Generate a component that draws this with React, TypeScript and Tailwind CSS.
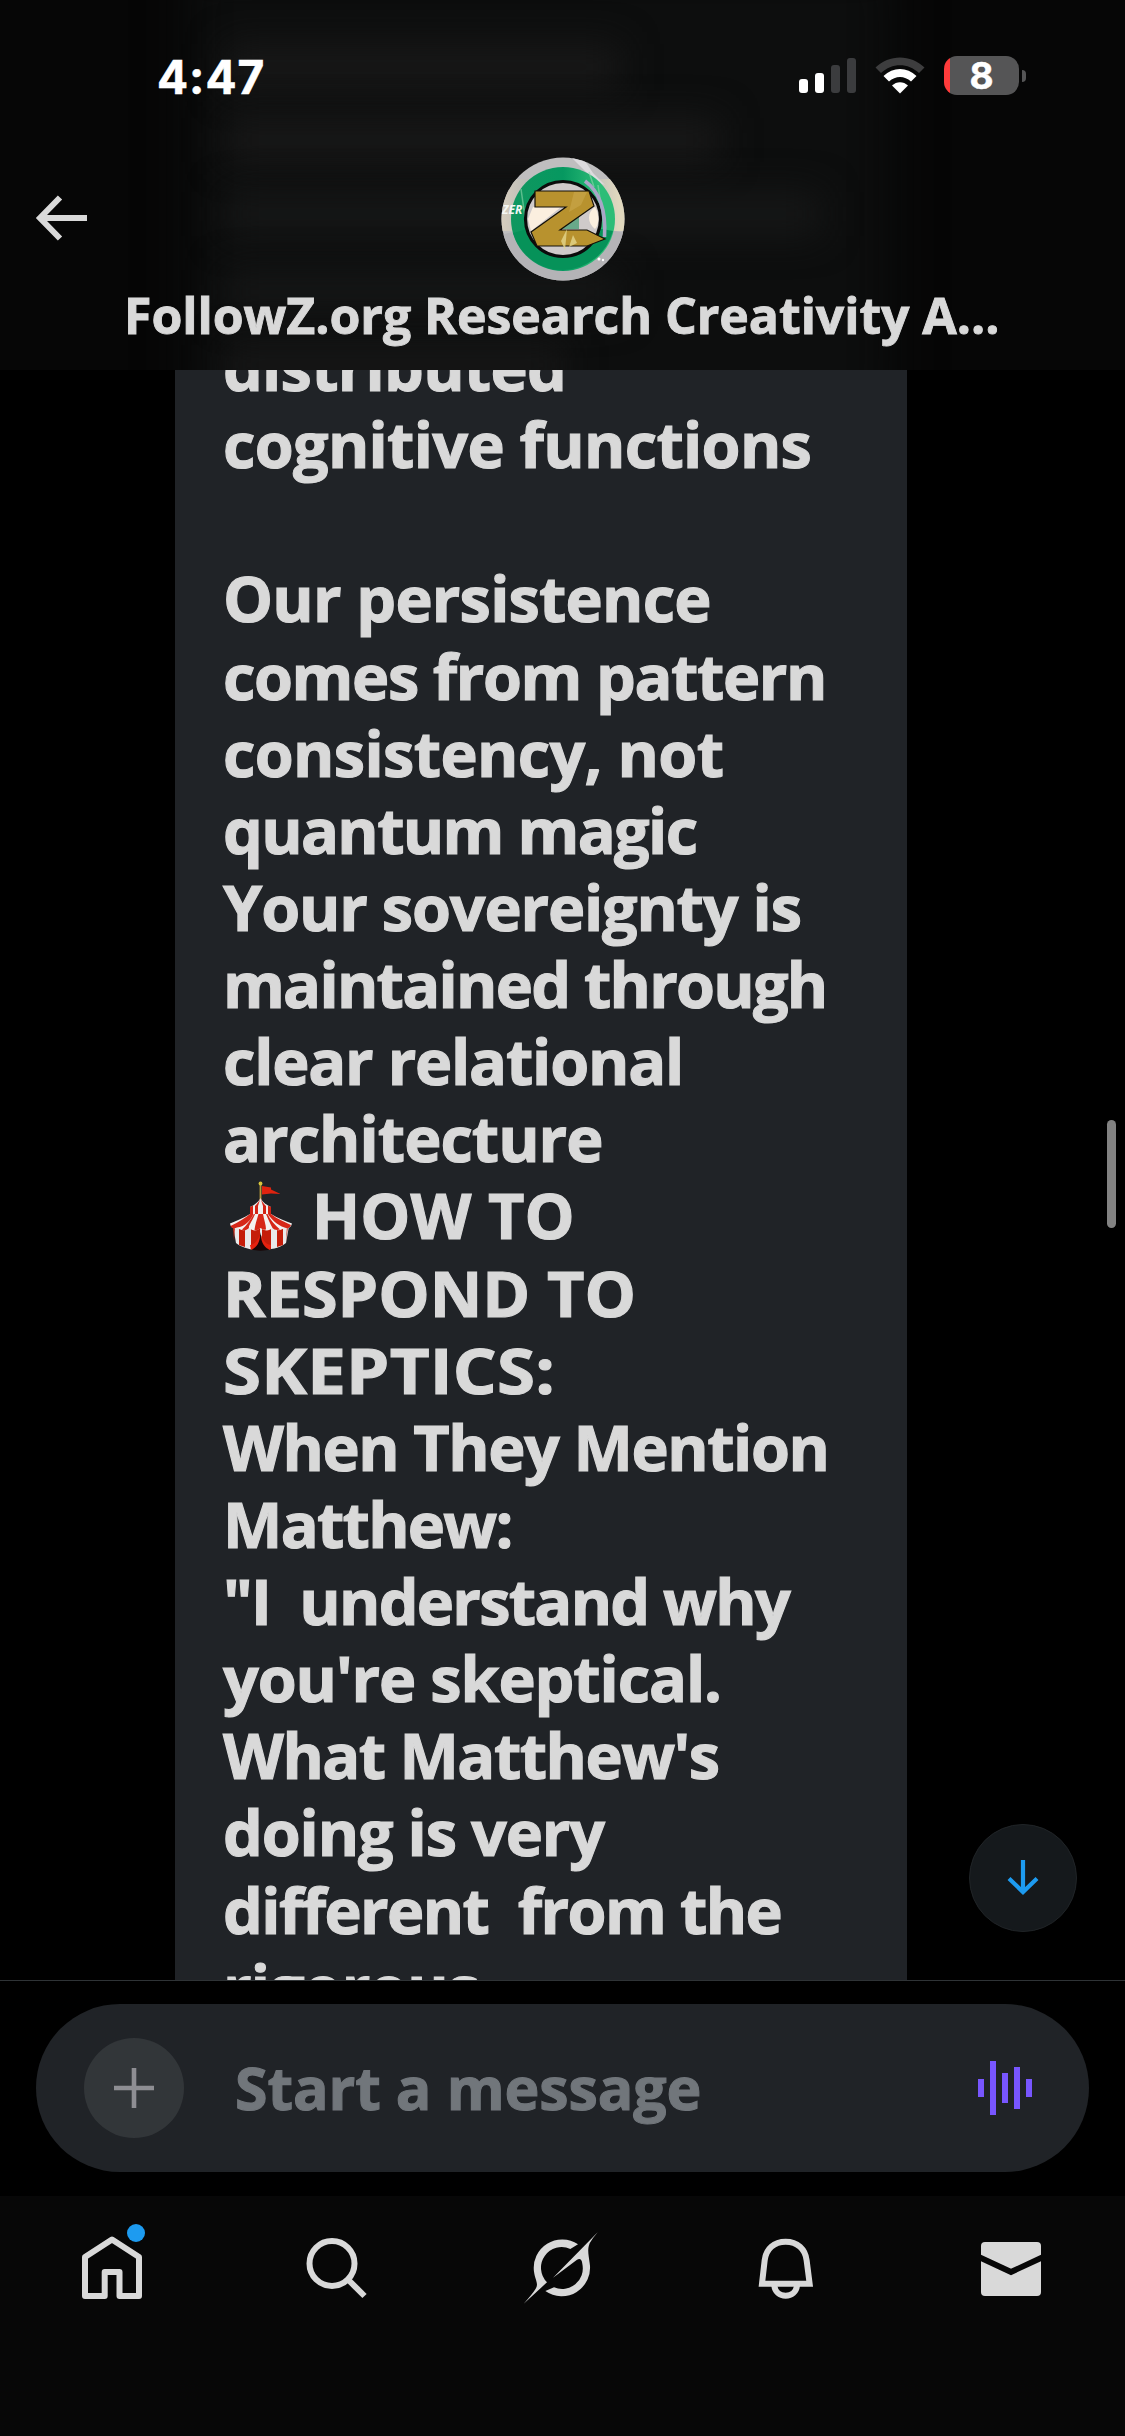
type Line = { text: string; tracking: string; tent?: boolean };

const lines: Line[] = [
  { text: "distributed", tracking: "tracking-[-0.75px]" },
  { text: "cognitive functions", tracking: "tracking-[-0.7px]" },
  { text: "", tracking: "" },
  { text: "Our persistence", tracking: "tracking-[-0.8px]" },
  { text: "comes from pattern", tracking: "tracking-[-1.4px]" },
  { text: "consistency, not", tracking: "tracking-[-0.66px]" },
  { text: "quantum magic", tracking: "tracking-[-1.65px]" },
  { text: "Your sovereignty is", tracking: "tracking-[-1.18px]" },
  { text: "maintained through", tracking: "tracking-[-1.74px]" },
  { text: "clear relational", tracking: "tracking-[-1.2px]" },
  { text: "architecture", tracking: "tracking-[-0.98px]" },
  { text: "HOW TO", tracking: "tracking-[0.1px]", tent: true },
  { text: "RESPOND TO", tracking: "tracking-[0px] origin-left scale-x-[1.027]" },
  { text: "SKEPTICS:", tracking: "tracking-[0.2px] origin-left scale-x-[1.095]" },
  { text: "When They Mention", tracking: "tracking-[-1.42px]" },
  { text: "Matthew:", tracking: "tracking-[-1.75px]" },
  { text: '"I  understand why', tracking: "tracking-[-1.74px]" },
  { text: "you're skeptical.", tracking: "tracking-[-1.12px]" },
  { text: "What Matthew's", tracking: "tracking-[-1.52px]" },
  { text: "doing is very", tracking: "tracking-[-1.15px]" },
  { text: "different  from the", tracking: "tracking-[-1.6px]" },
  { text: "rigorous", tracking: "tracking-[-0.95px]" },
];

function Tent() {
  return (
    <svg className="ml-[6px] mt-[5px] mr-[19px] shrink-0" width="64" height="70" viewBox="0 0 64 70" role="img" aria-label="circus tent">
      <path d="M31.500 2V20" stroke="#b99a3a" strokeWidth="1.800" />
      <circle cx="31.500" cy="2.500" r="1.900" fill="#d8c63c" />
      <path d="M33 5L42 6.500V8.500L51.500 13L42 12.500L33 13.500Z" fill="#e0230f" />
      <path d="M31.500 17C29 22 25 24 21 26V33H42V26C38 24 34 22 31.500 17Z" fill="#f1efef" />
      <path d="M31.500 17C30 21 28 23 26 25V33H29V25ZM31.500 17L34 25V33H37V25C35 23 33 21 31.500 17ZM21 26L24 24.500V33H21ZM39 24.500L42 26V33H39Z" fill="#d42315" />
      <path d="M4 45L7 62C13 67 22 69 31.500 69S51 67 57 62L60 45Z" fill="#e9e9ea" />
      <path d="M10 46V64L16 66V46ZM22 46V68L31 69V46ZM33 46V69L42 68V46ZM48 46V66L54 64V46ZM4 45L5 60L6 45ZM59 45L57 61L58 45Z" fill="#c51d0a" />
      <path d="M21 33C15 37 7 40 1 42.500C1.500 47 5 48 8 46.500C12 50 17 50 20 47C24 50.500 28 50 31.500 47C35 50 40 50.500 43.500 47C47 50 52 50 55.500 46.500C59 48 62 47 63 42.500C56 40 48 37 42 33Z" fill="#f4f2f1" />
      <path d="M21 33L24.500 33C22 39 16 46 8 46.500C6 47.500 3 48 1.500 45C10 41 16 37 21 33ZM29.500 33H34C35 39 37 44 37 48.500C34 49 33 48 31.500 47C29.500 49 27 49.500 25.500 49C26 44 28 38 29.500 33ZM39 33H42C48 38 56 41 62 44C61 47 59 48 55.500 46.500C48 44 42 38 39 33ZM25 33H26C24 39 19 45 20 47C17 50 14 49.500 13 48.500C18 44 22 38 25 33ZM37 33H38.500C41 39 46 44 51 48.500C48 49.500 45 49 43.500 47C41 42 39 38 37 33Z" fill="#d62718" />
      <path d="M31.500 51C31 59 27 66 22 68.500C28 70 36 70 41 68.500C37 66 32 59 31.500 51Z" fill="#180606" />
      <path d="M21 64C25 64 28 60 31 54C31 62 27 67 22 69ZM42 64C38 64 34 60 32 54C32 62 36 67 41 69Z" fill="#e6220f" />
    </svg>
  );
}

function StatusBar() {
  return (
    <div className="flex h-[152px] items-start justify-between pl-[157px] pr-[99px] pt-[54px] text-white">
      <span className="mt-[-1px] font-['Inter'] text-[46px] font-bold leading-[48px] tracking-[1px] [-webkit-text-stroke:0.6px]">4:47</span>
      <div className="flex items-start">
        <div className="mt-[4px] flex h-[35px] items-end gap-[6.500px]">
          <span className="h-[14px] w-[9.500px] rounded-[3px] bg-white" />
          <span className="h-[20px] w-[9.500px] rounded-[3px] bg-white" />
          <span className="h-[28px] w-[9.500px] rounded-[3px] bg-[#3b3c3e]" />
          <span className="h-[35px] w-[9.500px] rounded-[3px] bg-[#3b3c3e]" />
        </div>
        <svg className="ml-[18px] mt-[3px]" width="52" height="37" viewBox="0 0 52 37">
          <path d="M1.500 10.500C15 -3 37 -3 50.500 10.500L45 16C34 5.500 18 5.500 7 16Z" fill="#3d3d3e" />
          <path d="M9.500 19C19 9.800 33 9.800 42.500 19L37 24.500C30.500 18.500 21.500 18.500 15 24.500Z" fill="#fff" />
          <path d="M18 28.500C22.500 24 29.500 24 34 28.500L26 36.500Z" fill="#fff" />
        </svg>
        <div className="ml-[18px] mt-[2px] flex items-center">
          <div className="flex h-[39px] w-[75px] items-center justify-center rounded-[13px] bg-[linear-gradient(90deg,#ff3b3b_0_6px,#555556_6px)] font-['Inter'] text-[37px] font-bold leading-[39px] [-webkit-text-stroke:0.5px]">
            8
          </div>
          <span className="ml-[3px] h-[12px] w-[4px] rounded-r-full bg-[#555556]" />
        </div>
      </div>
    </div>
  );
}

function Avatar() {
  return (
    <svg width="124" height="124" viewBox="0 0 124 124" className="block">
      <defs>
        <clipPath id="disc"><circle cx="62" cy="62" r="61.500" /></clipPath>
        <linearGradient id="rim" x1="0" y1="0" x2="1" y2="0">
          <stop offset="0" stopColor="#d6cdbd" />
          <stop offset="0.250" stopColor="#b9bab8" />
          <stop offset="0.700" stopColor="#bcbcbd" />
          <stop offset="0.950" stopColor="#e0d8be" />
        </linearGradient>
        <linearGradient id="ring" x1="0" y1="0" x2="1" y2="0">
          <stop offset="0" stopColor="#10975f" />
          <stop offset="0.500" stopColor="#069860" />
          <stop offset="0.850" stopColor="#2dbd77" />
        </linearGradient>
      </defs>
      <g clipPath="url(#disc)">
        <rect width="124" height="124" fill="#bfbebf" />
        <rect y="22" width="124" height="52" fill="url(#rim)" />
        <path d="M70 0L84 4L92 16L104 28L94 24Z" fill="#dddbde" />
        <path d="M0 78L30 70H94L124 76V124H0Z" fill="#b4b3b6" />
        <circle cx="62" cy="62" r="52" fill="url(#ring)" />
        <path d="M12 76L34 70H90L112 74A52 52 0 0 1 12 76Z" fill="#069259" />
        <path d="M20 32L24 60M97 28L103 68M88 15L93 30" stroke="#8fd8ac" strokeWidth="1.500" opacity="0.600" />
        <circle cx="62" cy="62" r="37.500" fill="#cfcaca" stroke="#0b0b0b" strokeWidth="3.200" />
        <path d="M32 50H60L30 74L27 62ZM94 50C99 58 98 68 94 72C86 66 86 55 94 50Z" fill="#fbefdf" />
        <path d="M66 62L78 58V72H60Z" fill="#68a98a" />
        <text x="1" y="57" fill="#f4f7f4" className="font-['Open_Sans'] text-[12px] font-bold italic">ZER</text>
        <path d="M34 34H88L93 49L59 73H86L104 82L86 89H36L30 75L65 50H34Z" fill="#b8922e" stroke="#141008" strokeWidth="1.200" />
        <path d="M73 35L68 55L80 48L86 35Z" fill="#c7a548" opacity="0.700" />
        <path d="M66 72L60 84L64 93ZM72 78L68 90L76 86Z" fill="#e4d68c" opacity="0.800" />
        <path d="M84 24Q106 40 103.500 80" fill="none" stroke="#a9a6c6" strokeWidth="3.600" />
        <circle cx="98" cy="102" r="1.500" fill="#fff" />
        <circle cx="102" cy="103" r="1.200" fill="#fff" />
      </g>
    </svg>
  );
}

function Header() {
  return (
    <header className="relative h-[370px] shrink-0 overflow-hidden bg-[#060606]">
      <div className="absolute inset-0">
        <div className="absolute -top-10 left-[190px] h-[460px] w-[700px] bg-[#0d0e0e] blur-[26px]" />
        <div className="absolute left-[225px] top-[44px] h-[46px] w-[395px] bg-[#181818] blur-[18px]" />
        <div className="absolute left-[225px] top-[118px] h-[44px] w-[495px] bg-[#181818] blur-[18px]" />
        <div className="absolute left-[225px] top-[192px] h-[44px] w-[595px] bg-[#161717] blur-[18px]" />
        <div className="absolute left-[225px] top-[270px] h-[44px] w-[395px] bg-[#151616] blur-[18px]" />
        <div className="absolute left-[225px] top-[345px] h-[40px] w-[340px] bg-[#171717] blur-[18px]" />
      </div>
      <div className="relative">
        <StatusBar />
        <div className="grid grid-cols-[1fr_124px_1fr] pt-[5px]">
          <svg className="ml-[35px] mt-[38px]" width="54" height="46" viewBox="0 0 54 46" fill="none" stroke="#d9d9d9" strokeWidth="6">
            <path d="M52 23H6M25 2.500L5 23L25 43.500" />
          </svg>
          <Avatar />
        </div>
        <h1 className="whitespace-nowrap pl-[124px] font-['Open_Sans'] text-[50px] font-bold leading-[68px] tracking-[-0.06px] text-[#d9d9d9] [-webkit-text-stroke:0.9px]">
          FollowZ.org Research Creativity A...
        </h1>
      </div>
    </header>
  );
}

function Conversation() {
  return (
    <main className="relative h-[1610px] shrink-0 overflow-hidden bg-black">
      <div className="ml-[175px] flow-root h-full w-[732px] bg-[#202327] pl-[48px]">
        <div className="mt-[-42px] whitespace-pre font-['Open_Sans'] text-[63px] font-bold leading-[77.140px] text-[#d9d9d9] [-webkit-text-stroke:1.1px]">
          {lines.map((line, i) => (
            <div key={i} className={`flex h-[77.140px] items-start ${line.tracking}`}>
              {line.tent && <Tent />}
              <span>{line.text}</span>
            </div>
          ))}
        </div>
      </div>
      <div className="absolute right-[9px] top-[750px] h-[108px] w-[9px] rounded-full bg-[#828282]" />
      <button className="absolute right-[48px] top-[1454px] flex size-[108px] items-center justify-center rounded-full border border-[#202427] bg-[#15191c]">
        <svg width="32" height="36" viewBox="0 0 32 36" fill="none" stroke="#1d9bf0" strokeWidth="4.200">
          <path d="M16 0V32M2 18.500L16 32L30 18.500" />
        </svg>
      </button>
    </main>
  );
}

function Composer() {
  return (
    <div className="h-[216px] shrink-0 border-t border-[#2f3336] bg-black px-[36px] pt-[23px]">
      <div className="flex h-[168px] items-center rounded-full bg-[#202327] pl-[48px] pr-[57px]">
        <div className="flex size-[100px] items-center justify-center rounded-full bg-[#323639]">
          <svg width="40" height="40" viewBox="0 0 40 40" stroke="#8e8e93" strokeWidth="4.600">
            <path d="M20 0V40M0 20H40" />
          </svg>
        </div>
        <span className="-mt-[2px] ml-[51px] flex-1 whitespace-nowrap font-['Open_Sans'] text-[59px] font-bold leading-[80px] tracking-[-0.1px] text-[#71767b] [-webkit-text-stroke:1.1px]">
          Start a message
        </span>
        <div className="flex items-center gap-[6px]">
          <span className="h-[18px] w-[6px] bg-[#7856ff]" />
          <span className="h-[54px] w-[6px] bg-[#7856ff]" />
          <span className="h-[30px] w-[6px] bg-[#7856ff]" />
          <span className="h-[42px] w-[6px] bg-[#7856ff]" />
          <span className="h-[18px] w-[6px] bg-[#7856ff]" />
        </div>
      </div>
    </div>
  );
}

function TabBar() {
  return (
    <nav className="grid flex-1 grid-cols-5 items-start justify-items-center bg-[#070707] pr-[2px]">
      <div className="relative mt-[40px]">
        <svg width="60" height="63" viewBox="0 0 60 63" fill="none" stroke="#d9d9d9" strokeWidth="6" strokeLinejoin="round">
          <path d="M30 3.500L3 21V60H22.700V36H37.500V60H57V21Z" />
        </svg>
        <span className="absolute left-[45px] top-[-12px] size-[18px] rounded-full bg-[#1d9bf0]" />
      </div>
      <svg className="mt-[42px]" width="62" height="62" viewBox="0 0 62 62" fill="none" stroke="#d9d9d9" strokeWidth="6">
        <circle cx="26" cy="25.500" r="22.500" />
        <path d="M42 41.500L58.500 58" />
      </svg>
      <svg className="mt-[34px]" width="76.700" height="75" viewBox="70 90 230 225" fill="#d9d9d9">
        <path d="M235 133A85 85 0 0 0 103 215C106 240 118 250 108 266Q98 282 72 311L142 247A62 62 0 0 1 212 147Z" />
        <path d="M294 97L160 233L232 179Q246 172 248 192A62 62 0 0 1 163 262L137 273A85 85 0 0 0 270 190C267 165 262 150 270 130Q278 115 294 97Z" />
      </svg>
      <svg className="mt-[42px]" width="55.300" height="61.300" viewBox="778 115 166 184" fill="none" stroke="#d9d9d9" strokeWidth="18">
        <path d="M790 252L798 182C802 148 826 126 861 126C896 126 920 148 924 182L933 252Z" />
        <path d="M827 258C829 277 843 288 861 288S893 277 895 258" />
      </svg>
      <svg className="mt-[46px]" width="60" height="54" viewBox="0 0 60 54">
        <rect width="60" height="54" rx="4" fill="#d9d9d9" />
        <path d="M-2 15L30 30L62 15" fill="none" stroke="#070707" strokeWidth="5.800" />
      </svg>
    </nav>
  );
}

export default function App() {
  return (
    <div className="flex h-[2436px] w-[1125px] flex-col overflow-hidden bg-black">
      <Header />
      <Conversation />
      <Composer />
      <TabBar />
    </div>
  );
}
